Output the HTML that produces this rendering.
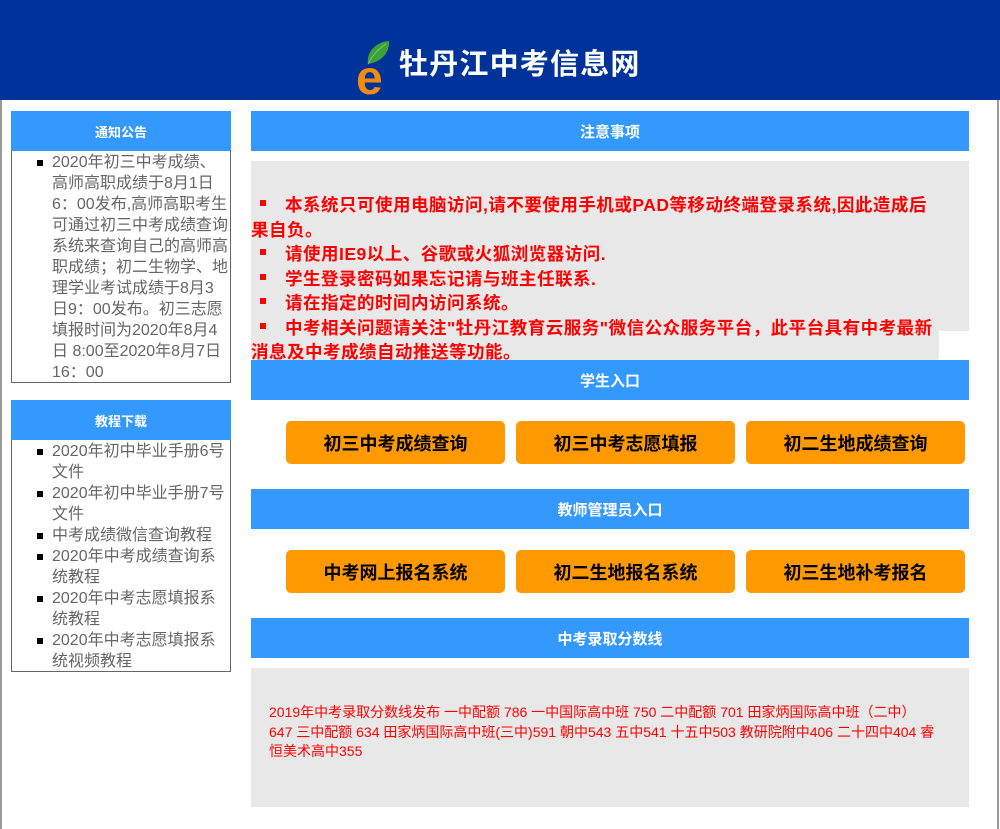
<!DOCTYPE html>
<html><head><meta charset="utf-8"><style>
*{margin:0;padding:0;box-sizing:border-box}
body{width:1000px;height:829px;position:relative;background:#fff;font-family:"Liberation Sans","Microsoft YaHei","Noto Sans CJK SC",sans-serif;overflow:hidden}
.top{position:absolute;left:0;top:0;width:1000px;height:100px;background:#003399}
.title{position:absolute;left:399px;top:45px;color:#fff;font-size:29px;font-weight:bold;letter-spacing:1.2px;line-height:40px}
.bl{position:absolute;top:100px;bottom:0;width:2px;background:#999}
.hd{position:absolute;background:#3399ff;color:#fff;font-weight:bold;font-size:15px;text-align:center;line-height:43px;height:40px}
.box{position:absolute;border:1px solid #666;border-top:none}
.box ul{list-style:none;margin:0;padding:0 0 0 40px;color:#666;font-size:16px;line-height:21px}
.box li{position:relative}
.box li:before{content:"";position:absolute;left:-15px;top:8px;width:6px;height:6px;background:#000}
.grey{position:absolute;background:#e8e8e8}
.red{color:#f00;font-weight:bold;font-size:17.5px;line-height:24.5px;white-space:nowrap;letter-spacing:0.5px}
.btn{position:absolute;width:219px;height:43px;background:#ff9900;border-radius:5px;text-align:center;line-height:47px;font-size:18px;font-weight:bold;color:#000}
.sq{display:inline-block;width:6px;height:6px;background:#f00;vertical-align:middle;margin:0 19px 0 9px;position:relative;top:-3px}
</style></head><body>
<div class="top">
<svg style="position:absolute;left:357px;top:40px" width="38" height="56" viewBox="0 0 38 56">
<path d="M11 24 C9 12 19 2 32 1 C33 12 25 22 11 24Z" fill="#3ca03c"/>
<path d="M11 24 C15 16 21 9 29 4" stroke="#7cc46a" stroke-width="1" fill="none"/>
<text x="-1" y="54" font-family="Liberation Sans,sans-serif" font-size="48" font-weight="bold" fill="#f08c10">e</text>
</svg>
<div class="title">牡丹江中考信息网</div>
</div>
<div class="bl" style="left:0"></div>
<div class="bl" style="left:997px"></div>

<div class="hd" style="left:11px;top:111px;width:220px;font-size:13px">通知公告</div>
<div class="box" style="left:11px;top:151px;width:220px;height:232px"><ul style="padding-top:1px;white-space:nowrap"><li>2020年初三中考成绩、<br>高师高职成绩于8月1日<br>6：00发布,高师高职考生<br>可通过初三中考成绩查询<br>系统来查询自己的高师高<br>职成绩；初二生物学、地<br>理学业考试成绩于8月3<br>日9：00发布。初三志愿<br>填报时间为2020年8月4<br>日 8:00至2020年8月7日<br>16：00</li></ul></div>

<div class="hd" style="left:11px;top:400px;width:220px;font-size:13px">教程下载</div>
<div class="box" style="left:11px;top:440px;width:220px;height:232px"><ul style="padding-top:1px"><li>2020年初中毕业手册6号文件</li><li>2020年初中毕业手册7号文件</li><li>中考成绩微信查询教程</li><li>2020年中考成绩查询系统教程</li><li>2020年中考志愿填报系统教程</li><li>2020年中考志愿填报系统视频教程</li></ul></div>

<div class="hd" style="left:251px;top:111px;width:718px">注意事项</div>
<div class="grey" style="left:251px;top:161px;width:718px;height:170px"></div>
<div class="grey" style="left:251px;top:331px;width:688px;height:29px;border-radius:0 0 3px 3px"></div>
<div class="red" style="position:absolute;left:251px;top:193px">
<div><span class="sq"></span>本系统只可使用电脑访问,请不要使用手机或PAD等移动终端登录系统,因此造成后<br>果自负。</div>
<div><span class="sq"></span>请使用IE9以上、谷歌或火狐浏览器访问.</div>
<div><span class="sq"></span>学生登录密码如果忘记请与班主任联系.</div>
<div><span class="sq"></span>请在指定的时间内访问系统。</div>
<div><span class="sq"></span>中考相关问题请关注"牡丹江教育云服务"微信公众服务平台，此平台具有中考最新<br>消息及中考成绩自动推送等功能。</div>
</div>

<div class="hd" style="left:251px;top:360px;width:718px">学生入口</div>
<div class="btn" style="left:286px;top:421px">初三中考成绩查询</div>
<div class="btn" style="left:516px;top:421px">初三中考志愿填报</div>
<div class="btn" style="left:746px;top:421px">初二生地成绩查询</div>

<div class="hd" style="left:251px;top:489px;width:718px">教师管理员入口</div>
<div class="btn" style="left:286px;top:550px">中考网上报名系统</div>
<div class="btn" style="left:516px;top:550px">初二生地报名系统</div>
<div class="btn" style="left:746px;top:550px">初三生地补考报名</div>

<div class="hd" style="left:251px;top:618px;width:718px">中考录取分数线</div>
<div class="grey" style="left:251px;top:668px;width:718px;height:139px"></div>
<div style="position:absolute;left:269px;top:703px;white-space:nowrap;color:#f00;font-size:14px;line-height:19.5px">2019年中考录取分数线发布 一中配额 786 一中国际高中班 750 二中配额 701 田家炳国际高中班（二中）<br>647 三中配额 634 田家炳国际高中班(三中)591 朝中543 五中541 十五中503 教研院附中406 二十四中404 睿<br>恒美术高中355</div>
</body></html>
